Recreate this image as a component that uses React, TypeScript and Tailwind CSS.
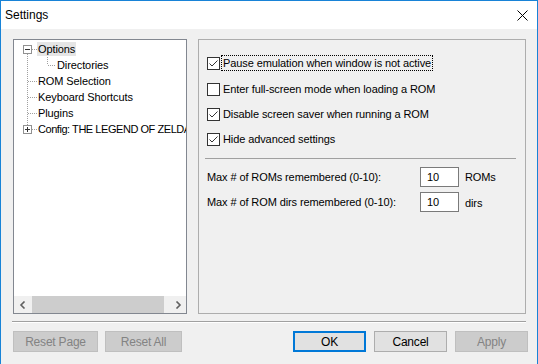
import React from "react";

const font = { fontFamily: '"Liberation Sans", Arial, sans-serif' };

function Check({ checked }: { checked: boolean }) {
  return (
    <div className="w-[13px] h-[13px] border border-[#333333] bg-white flex items-center justify-center shrink-0">
      {checked && (
        <svg width="11" height="11" viewBox="0 0 11 11">
          <path d="M1.5 5.5 L4 8 L9.5 2.5" fill="none" stroke="#333333" strokeWidth="1" />
        </svg>
      )}
    </div>
  );
}

function CheckRow({ checked, label, focus, className }: { checked: boolean; label: string; focus?: boolean; className?: string }) {
  return (
    <div className={"flex items-center h-[16px] ml-[8px] " + (className ?? "")}>
      <Check checked={checked} />
      <span
        className={
          "ml-[2px] px-[1px] leading-[14px] whitespace-nowrap " +
          (focus ? "outline outline-1 outline-dotted outline-[#000]" : "")
        }
      >
        {label}
      </span>
    </div>
  );
}

function Btn({ label, w, kind }: { label: string; w: string; kind: "disabled" | "default" | "primary" }) {
  const cls =
    kind === "disabled"
      ? "bg-[#cccccc] border border-[#bfbfbf] text-[#838383]"
      : kind === "primary"
      ? "bg-[#e1e1e1] border-2 border-[#0078d7] text-black"
      : "bg-[#e1e1e1] border border-[#adadad] text-black";
  return <div className={`${w} h-[21px] flex items-center justify-center ${cls}`}>{label}</div>;
}

function TreeLines() {
  return (
    <svg className="absolute left-0 top-0" width="60" height="100" viewBox="0 0 60 100">
      <g stroke="#a0a0a0" strokeWidth="1" strokeDasharray="1 1" fill="none">
        <line x1="13.5" y1="14" x2="13.5" y2="85" />
        <line x1="18" y1="9.5" x2="23" y2="9.5" />
        <line x1="33.5" y1="17" x2="33.5" y2="25" />
        <line x1="34" y1="25.5" x2="42" y2="25.5" />
        <line x1="14" y1="41.5" x2="23" y2="41.5" />
        <line x1="14" y1="57.5" x2="23" y2="57.5" />
        <line x1="14" y1="73.5" x2="23" y2="73.5" />
        <line x1="18" y1="89.5" x2="23" y2="89.5" />
      </g>
      <g fill="#fff" stroke="#919191">
        <rect x="9.5" y="5.5" width="8" height="8" />
        <rect x="9.5" y="85.5" width="8" height="8" />
      </g>
      <g stroke="#333" strokeWidth="1">
        <line x1="11" y1="9.5" x2="16" y2="9.5" />
        <line x1="11" y1="89.5" x2="16" y2="89.5" />
        <line x1="13.5" y1="87" x2="13.5" y2="92" />
      </g>
    </svg>
  );
}

export default function App() {
  return (
    <div
      className="w-[538px] h-[364px] bg-[#f0f0f0] border-l border-r border-t border-[#1883d7] flex flex-col text-[11px] tracking-[-0.1px] text-black overflow-hidden"
      style={font}
    >
      {/* Title bar */}
      <div className="h-[28px] bg-white flex items-center justify-between pl-[4px] pr-[9px] shrink-0">
        <span className="text-[12px] tracking-normal">Settings</span>
        <svg width="11" height="11" viewBox="0 0 11 11">
          <path d="M0.5 0.5 L10.5 10.5 M10.5 0.5 L0.5 10.5" stroke="#000" strokeWidth="1" />
        </svg>
      </div>

      {/* Panels */}
      <div className="flex pl-[12px] pt-[10px] gap-[11px]">
        {/* Tree */}
        <div className="w-[174px] h-[275px] border border-[#828790] bg-white flex flex-col">
          <div className="relative flex-1 overflow-hidden pt-[1px]">
            <TreeLines />
            <div className="flex flex-col">
              <div className="h-[16px] flex items-center pl-[23px]">
                <span className="bg-[#e5e5e5] px-[1px] leading-[14px]">Options</span>
              </div>
              <div className="h-[16px] flex items-center pl-[43px]">Directories</div>
              <div className="h-[16px] flex items-center pl-[24px]">ROM Selection</div>
              <div className="h-[16px] flex items-center pl-[24px]">Keyboard Shortcuts</div>
              <div className="h-[16px] flex items-center pl-[24px]">Plugins</div>
              <div className="h-[16px] flex items-center pl-[24px] whitespace-nowrap overflow-hidden tracking-[-0.45px]">Config: THE LEGEND OF ZELDA</div>
            </div>
          </div>
          {/* Horizontal scrollbar */}
          <div className="h-[17px] bg-[#f0f0f0] flex items-center">
            <div className="w-[17px] h-full flex items-center justify-center">
              <svg width="8" height="8" viewBox="0 0 8 8">
                <path d="M5.5 0.5 L2 4 L5.5 7.5" fill="none" stroke="#606060" strokeWidth="1.6" />
              </svg>
            </div>
            <div className="flex-1 h-full flex items-center pl-[1px]">
              <div className="w-[132px] h-full bg-[#cdcdcd]" />
            </div>
            <div className="w-[17px] h-full flex items-center justify-center">
              <svg width="8" height="8" viewBox="0 0 8 8">
                <path d="M2.5 0.5 L6 4 L2.5 7.5" fill="none" stroke="#606060" strokeWidth="1.6" />
              </svg>
            </div>
          </div>
        </div>

        {/* Right panel */}
        <div className="w-[328px] h-[275px] border border-[#adadad] flex flex-col pt-[15px]">
          <CheckRow checked label="Pause emulation when window is not active" focus />
          <CheckRow checked={false} label="Enter full-screen mode when loading a ROM" className="mt-[10px]" />
          <CheckRow checked label="Disable screen saver when running a ROM" className="mt-[9px]" />
          <CheckRow checked label="Hide advanced settings" className="mt-[9px]" />
          <div className="mt-[11px] ml-[6px] w-[311px] h-0 border-t border-[#a0a0a0]" />
          <div className="mt-[8px] ml-[8px] flex items-center h-[20px] whitespace-nowrap">
            <span className="w-[213px]">Max # of ROMs remembered (0-10):</span>
            <div className="w-[39px] h-[20px] border border-[#7a7a7a] bg-white flex items-center pl-[6px]">10</div>
            <span className="ml-[6px] mt-[1px]">ROMs</span>
          </div>
          <div className="mt-[5px] ml-[8px] flex items-center h-[20px] whitespace-nowrap">
            <span className="w-[213px]">Max # of ROM dirs remembered (0-10):</span>
            <div className="w-[39px] h-[20px] border border-[#7a7a7a] bg-white flex items-center pl-[6px]">10</div>
            <span className="ml-[6px] mt-[3px]">dirs</span>
          </div>
        </div>
      </div>

      {/* Separator */}
      <div className="mt-[7px] ml-[11px] w-[514px] h-[2px] border-t border-[#a0a0a0] border-b border-b-white" />

      {/* Buttons */}
      <div className="mt-[8px] flex pl-[12px] pr-[9px] text-[12px] tracking-[-0.2px]">
        <div className="flex gap-[7px]">
          <Btn label="Reset Page" w="w-[85px]" kind="disabled" />
          <Btn label="Reset All" w="w-[77px]" kind="disabled" />
        </div>
        <div className="ml-auto flex gap-[8px]">
          <Btn label="OK" w="w-[73px]" kind="primary" />
          <Btn label="Cancel" w="w-[73px]" kind="default" />
          <Btn label="Apply" w="w-[73px]" kind="disabled" />
        </div>
      </div>
    </div>
  );
}
